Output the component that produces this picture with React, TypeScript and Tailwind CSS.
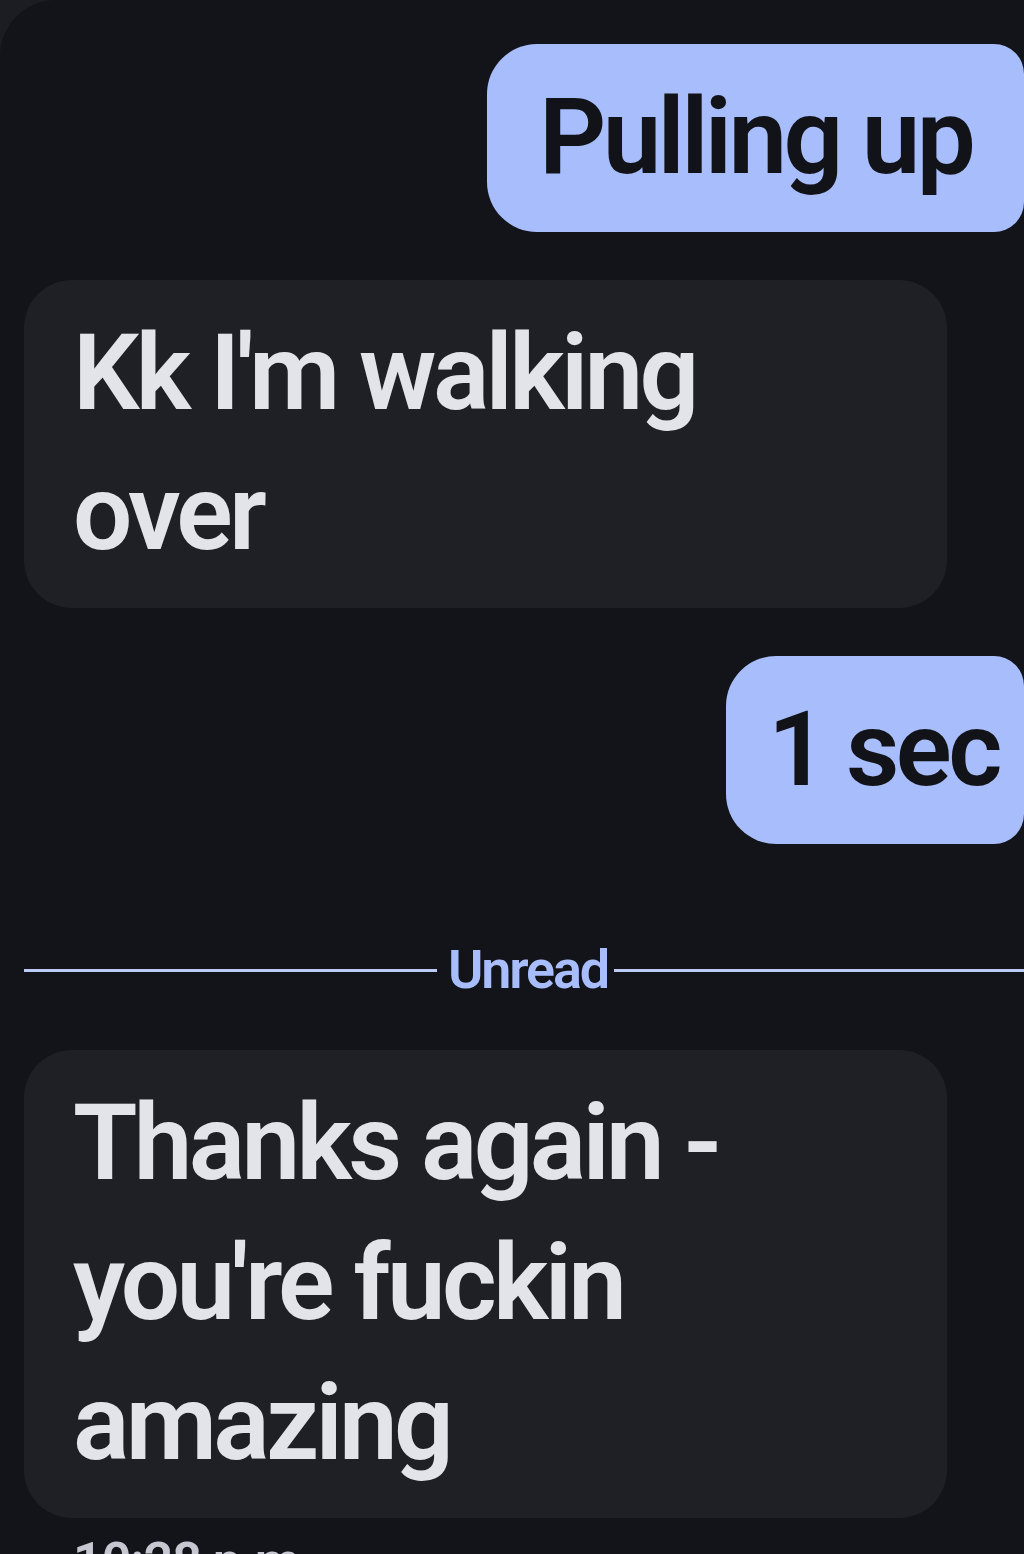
export default function App() {
  return (
    <div className="h-[1554px] w-[1024px] overflow-hidden bg-[#1c1d22]">
      <div
        className="h-full w-[1024px] rounded-tl-[56px] bg-[#13141a] pt-[44px] pl-[24px]"
        style={{ fontFamily: 'Roboto, "Noto Sans", sans-serif' }}
      >
        {/* Sent */}
        <div className="flex justify-end">
          <div className="w-[537px] rounded-l-[50px] rounded-r-[30px] bg-[#a8bdfb] pl-[52px] py-[24px] text-[105px] font-semibold leading-[140px] tracking-[-0.035em] whitespace-nowrap text-[#121318]">
            Pulling up
          </div>
        </div>

        {/* Received */}
        <div className="mt-[48px] flex justify-start">
          <div className="w-[923px] rounded-[48px] bg-[#1f2026] px-[49px] py-[24px] text-[105px] font-semibold leading-[140px] tracking-[-0.035em] text-[#e3e3ea]">
            Kk I'm walking over
          </div>
        </div>

        {/* Sent */}
        <div className="mt-[48px] flex justify-end">
          <div className="w-[298px] rounded-l-[50px] rounded-r-[30px] bg-[#a8bdfb] pl-[42px] py-[24px] text-[104px] font-semibold leading-[140px] tracking-[-0.035em] whitespace-nowrap text-[#121318]">
            1 sec
          </div>
        </div>

        {/* Unread divider */}
        <div className="mt-[98px] flex items-center">
          <div className="h-[3px] flex-1 bg-[#bccbf5]" />
          <span className="ml-[11px] mr-[6px] text-[54px] font-semibold leading-[56px] tracking-[-0.04em] text-[#a8bdfb]">Unread</span>
          <div className="h-[3px] w-[410px] bg-[#bccbf5]" />
        </div>

        {/* Received */}
        <div className="mt-[52px] flex justify-start">
          <div className="w-[923px] rounded-[48px] bg-[#1f2026] px-[49px] py-[24px] text-[105px] font-semibold leading-[140px] tracking-[-0.035em] text-[#e3e3ea]">
            Thanks again - you're fuckin amazing
          </div>
        </div>

        <div className="mt-[14px] pl-[49px] text-[52px] font-semibold leading-[60px] tracking-[-0.02em] text-[#c6c7d0]">
          10:28 p.m.
        </div>
      </div>
    </div>
  );
}
